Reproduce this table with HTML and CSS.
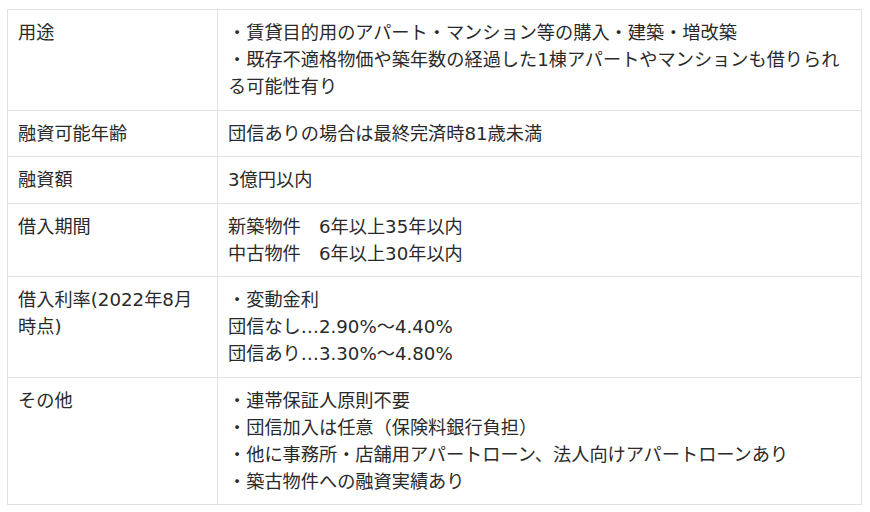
FILE: index.html
```html
<!DOCTYPE html>
<html lang="ja">
<head>
<meta charset="utf-8">
<link rel="stylesheet" href="styles.css">
</head>
<body>
<div class="wrap">
<table class="spec">
  <tr>
    <th>用途</th>
    <td>・賃貸目的用のアパート・マンション等の購入・建築・増改築<br>・既存不適格物価や築年数の経過した1棟アパートやマンションも借りられ<br>る可能性有り</td>
  </tr>
  <tr>
    <th>融資可能年齢</th>
    <td>団信ありの場合は最終完済時81歳未満</td>
  </tr>
  <tr>
    <th>融資額</th>
    <td>3億円以内</td>
  </tr>
  <tr>
    <th>借入期間</th>
    <td>新築物件　6年以上35年以内<br>中古物件　6年以上30年以内</td>
  </tr>
  <tr>
    <th>借入利率(2022年8月<br>時点)</th>
    <td>・変動金利<br>団信なし…2.90%〜4.40%<br>団信あり…3.30%〜4.80%</td>
  </tr>
  <tr>
    <th>その他</th>
    <td>・連帯保証人原則不要<br>・団信加入は任意（保険料銀行負担）<br>・他に事務所・店舗用アパートローン、法人向けアパートローンあり<br>・築古物件への融資実績あり</td>
  </tr>
</table>
</div>
</body>
</html>
```

FILE: styles.css
```css
html, body {
  margin: 0;
  padding: 0;
  background: #fff;
}

.wrap {
  padding: 9px 0 0 7px;
}

.spec {
  border-collapse: collapse;
  width: 855px;
  table-layout: fixed;
  font-family: "DejaVu Sans", "Noto Sans CJK JP", sans-serif;
  font-size: 18.2px;
  line-height: 27px;
  color: #2a2a2a;
}

.spec th,
.spec td {
  border: 1px solid #e2e2e2;
  padding: 9px 10px 9.5px 10px;
  vertical-align: top;
  text-align: left;
  font-weight: normal;
  white-space: nowrap;
}

.spec th {
  width: 189px;
}
```
